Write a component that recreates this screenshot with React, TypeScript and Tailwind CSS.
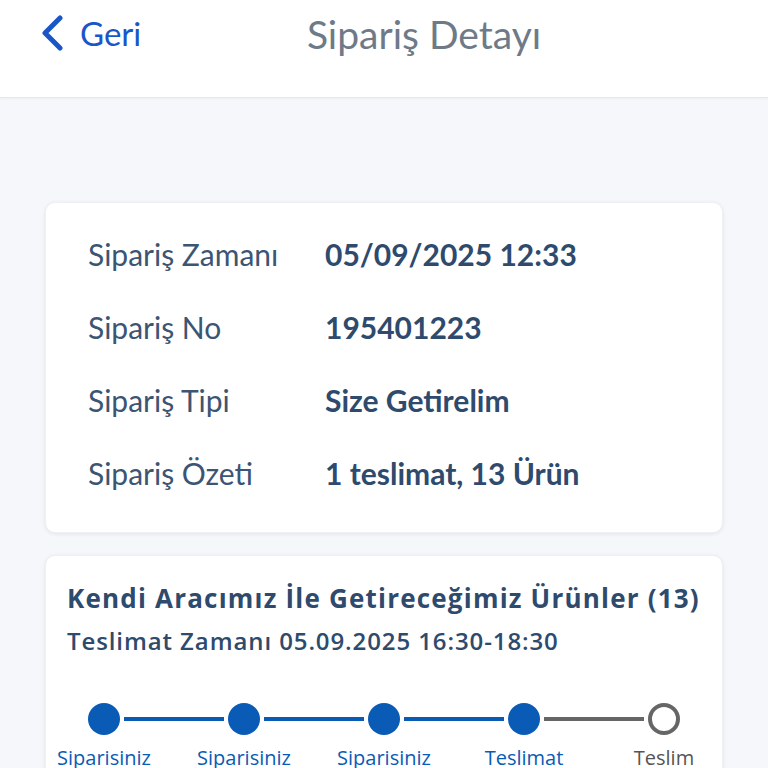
import React from 'react';

const ChevronLeft = () => (
  <svg width="26" height="36" viewBox="0 0 26 36" fill="none">
    <path d="M20 3L5 18l15 15" stroke="#1a56c8" strokeWidth="5" strokeLinecap="round" strokeLinejoin="round" />
  </svg>
);

const rows = [
  { label: 'Sipariş Zamanı', value: '05/09/2025 12:33' },
  { label: 'Sipariş No', value: '195401223' },
  { label: 'Sipariş Tipi', value: 'Size Getirelim' },
  { label: 'Sipariş Özeti', value: '1 teslimat, 13 Ürün' },
];

const steps = [
  { label: 'Siparisiniz', done: true },
  { label: 'Siparisiniz', done: true },
  { label: 'Siparisiniz', done: true },
  { label: 'Teslimat', done: true },
  { label: 'Teslim', done: false },
];

const App: React.FC = () => {
  return (
    <div className="h-[768px] overflow-hidden bg-[#f5f7fb] font-['Lato',sans-serif]">
      <header className="relative h-[98px] bg-white border-b border-[#e6e8ec] shadow-[0_1px_2px_rgba(0,0,0,0.04)]">
        <div className="absolute left-[40px] top-[15px] flex items-center gap-[14px]">
          <ChevronLeft />
          <span className="text-[33px] text-[#1a56c8] leading-none">Geri</span>
        </div>
        <h1 className="pt-[11px] text-center text-[39px] text-[#6e7a88] leading-[46px] pl-[80px]">Sipariş Detayı</h1>
      </header>

      <main className="px-[45px] pt-[104px] flex flex-col gap-[22px]">
        <section className="bg-white rounded-[10px] shadow-[0_1px_4px_rgba(0,0,0,0.08)] border border-[#eef0f3] pl-[42px] pt-[15px] h-[331px]">
          {rows.map((r) => (
            <div key={r.label} className="flex items-center h-[73px]">
              <span className="w-[237px] text-[30px] text-[#3b5573]">{r.label}</span>
              <span className="text-[30px] font-bold text-[#2e4a6d]">{r.value}</span>
            </div>
          ))}
        </section>

        <section className="bg-white rounded-[10px] shadow-[0_1px_4px_rgba(0,0,0,0.08)] border border-[#eef0f3] px-[21px] pt-[24px] h-[260px] font-['Open_Sans',sans-serif]">
          <h2 className="text-[26px] font-bold text-[#2e4a6d] leading-[36px] tracking-[1.2px] whitespace-nowrap">Kendi Aracımız İle Getireceğimiz Ürünler (13)</h2>
          <p className="mt-[9px] text-[24px] font-semibold text-[#2e4a6d] leading-[32px] tracking-[0.9px] whitespace-nowrap">Teslimat Zamanı 05.09.2025 16:30-18:30</p>
          <div className="mt-[46px] -ml-[33px] flex">
            {steps.map((s, i) => (
              <div key={i} className="relative w-[140px] shrink-0 flex flex-col items-center">
                {i < steps.length - 1 && (
                  <div className={`absolute top-[14px] left-[90px] w-[100px] h-[4px] ${steps[i + 1].done ? 'bg-[#0a5bb5]' : 'bg-[#666666]'}`} />
                )}
                {s.done ? (
                  <div className="w-[32px] h-[32px] rounded-full bg-[#0a5bb5]" />
                ) : (
                  <div className="w-[32px] h-[32px] rounded-full border-[4px] border-[#666666] bg-white" />
                )}
                <span className={`mt-[10px] text-[20px] leading-[26px] ${s.done ? 'text-[#0a5bb5]' : 'text-[#555555]'}`}>{s.label}</span>
              </div>
            ))}
          </div>
        </section>
      </main>
    </div>
  );
};

export default App;
